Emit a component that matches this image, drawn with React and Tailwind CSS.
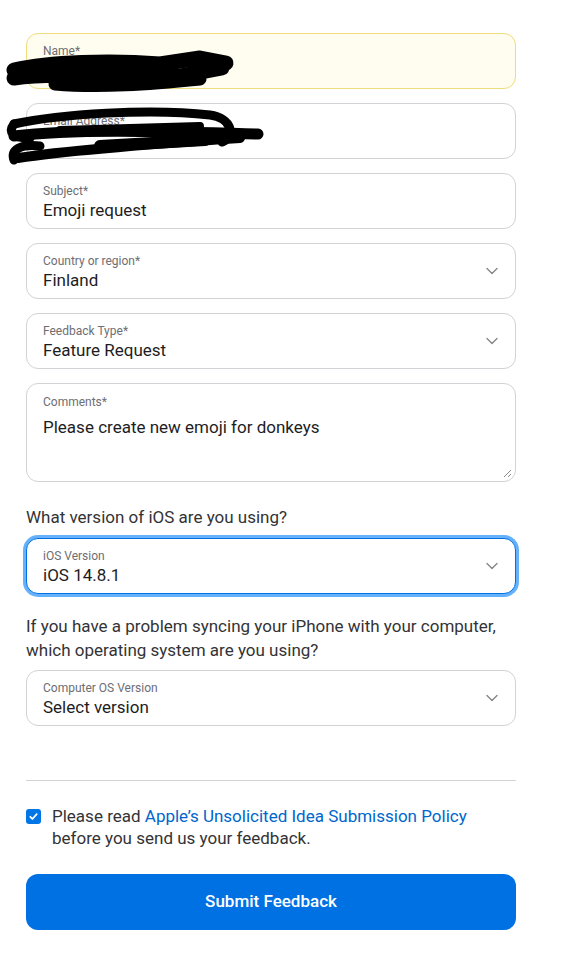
import React from 'react';

const Chevron = () => (
  <svg width="12" height="8" viewBox="0 0 12 8" className="text-[#86868b]">
    <path d="M1 1.5l5 5 5-5" fill="none" stroke="currentColor" strokeWidth="1.4" strokeLinecap="round" strokeLinejoin="round" />
  </svg>
);

const Field = ({ label, value, select, className = '' }) => (
  <div
    className={`flex h-[56px] items-center justify-between rounded-xl border px-4 ${className || 'border-[#d2d2d7] bg-white'}`}
  >
    <div className="flex flex-col pt-[2px]">
      <span className="text-[12px] leading-[16px] text-[#6e6e73]">{label}</span>
      <span className="h-[22px] text-[17px] leading-[22px] text-[#1d1d1f]">{value}</span>
    </div>
    {select && (
      <div className="mr-[1px]">
        <Chevron />
      </div>
    )}
  </div>
);

// redaction marks drawn over the first two fields
const Scribbles = () => (
  <svg className="pointer-events-none absolute left-0 top-0" width="565" height="200">
    <g fill="none" stroke="#000" strokeLinecap="round" strokeLinejoin="round">
      <path d="M14 70 C50 62 110 60 160 64 L200 58 L226 63" strokeWidth="15" />
      <path d="M14 78 C60 72 120 78 180 76 L222 68" strokeWidth="15" />
      <path d="M55 84 C100 88 150 84 200 79" strokeWidth="13" />
      <path d="M14 124 C60 114 150 108 210 115 C232 118 236 136 222 142" strokeWidth="9" />
      <path d="M14 136 C80 128 180 132 258 134" strokeWidth="11" />
      <path d="M14 124 C8 132 12 138 30 138" strokeWidth="9" />
      <path d="M18 158 C70 150 150 144 240 138" strokeWidth="10" />
      <path d="M14 160 C10 150 20 144 40 146" strokeWidth="9" />
      <path d="M100 146 L205 140" strokeWidth="12" />
      <path d="M60 130 L200 126" strokeWidth="8" />
    </g>
  </svg>
);

export default function App() {
  return (
    <div className="relative min-h-[973px] bg-white font-['Roboto',sans-serif]">
      <Scribbles />
      <div className="ml-[26px] w-[490px] pt-[33px]">
        <div className="flex flex-col gap-[14px]">
          <Field label="Name*" value="" className="border-[#efdc7a] bg-[#fffdef]" />
          <Field label="Email Address*" value="" />
          <Field label="Subject*" value="Emoji request" />
          <Field label="Country or region*" value="Finland" select />
          <Field label="Feedback Type*" value="Feature Request" select />
          <div className="relative h-[99px] rounded-xl border border-[#d2d2d7] px-4 pt-[10px]">
            <div className="text-[12px] leading-[16px] text-[#6e6e73]">Comments*</div>
            <div className="mt-[6px] text-[17px] leading-[22px] text-[#1d1d1f]">
              Please create new emoji for donkeys
            </div>
            <svg className="absolute bottom-[3px] right-[3px]" width="10" height="10" viewBox="0 0 10 10">
              <path d="M9 2L2 9M9 6L6 9" stroke="#8a8a8a" strokeWidth="1" />
            </svg>
          </div>
        </div>

        <p className="mt-[23px] mb-[9px] text-[17px] leading-[24px] text-[#333336]">
          What version of iOS are you using?
        </p>
        <Field
          label="iOS Version"
          value="iOS 14.8.1"
          select
          className="border-[#0071e3] bg-white shadow-[0_0_0_3px_rgba(0,125,250,0.6)]"
        />

        <p className="mt-[20px] mb-[8px] text-[17px] leading-[24px] text-[#333336]">
          If you have a problem syncing your iPhone with your computer, which operating system are you using?
        </p>
        <Field label="Computer OS Version" value="Select version" select />

        <div className="mt-[54px] border-t border-[#d2d2d7]" />

        <div className="mt-[24px] flex items-start gap-[11px]">
          <div className="mt-[4px] flex h-[15px] w-[15px] shrink-0 items-center justify-center rounded-[3px] bg-[#0075e6]">
            <svg width="11" height="11" viewBox="0 0 12 12">
              <path d="M2.5 6.3l2.3 2.4 4.7-5.2" fill="none" stroke="#fff" strokeWidth="1.9" strokeLinecap="round" strokeLinejoin="round" />
            </svg>
          </div>
          <p className="text-[17px] leading-[22px] text-[#333336]">
            Please read <span className="text-[#0066cc]">Apple’s Unsolicited Idea Submission Policy</span>
            <br />
            before you send us your feedback.
          </p>
        </div>

        <button className="mt-[25px] flex h-[56px] w-full items-center justify-center rounded-xl bg-[#0071e3] text-[17px] font-medium text-white">
          Submit Feedback
        </button>
      </div>
    </div>
  );
}
